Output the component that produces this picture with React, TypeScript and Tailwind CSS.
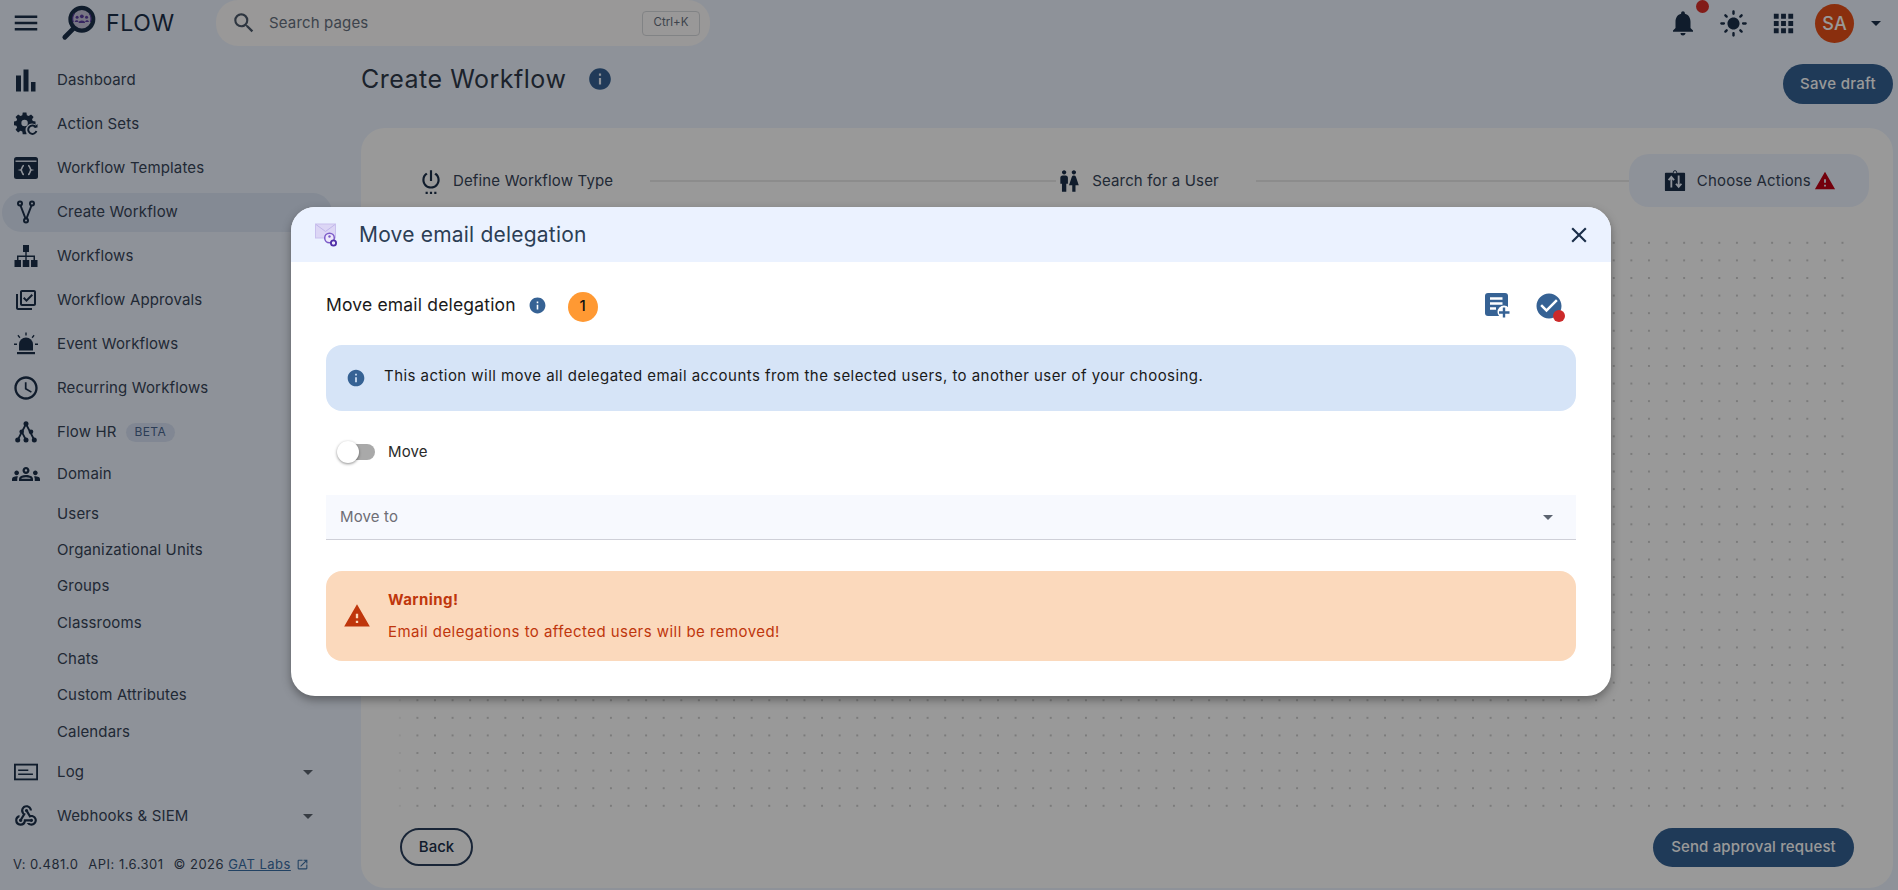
import React from "react";
import {
  MdOutlineLibraryAddCheck, MdOutlineAccessTime, MdOutlineGroups, MdOutlineWebhook, MdNotifications,
  MdLightMode, MdApps, MdSettingsPower, MdWc, MdInfo, MdCheckCircle, MdWarning, MdClose, MdSearch,
  MdArrowDropDown, MdOpenInNew, MdMenu,
} from "react-icons/md";

const Bars = () => (
  <svg viewBox="0 0 24 24" className="w-6 h-6" fill="#1b2f4a">
    <rect x="2" y="7.500" width="5" height="16" />
    <rect x="9.500" y="1.500" width="5" height="22" />
    <rect x="17" y="14" width="4.500" height="9.500" />
  </svg>
);
const ActionSets = () => (
  <svg viewBox="0 0 24 24" className="w-6 h-6">
    <path fill="#1b2f4a" fillRule="evenodd" d="M9.500 0.500h4l.5 3 2 .8 2.500-1.700 2.800 2.800-1.700 2.500.8 2 3 .5v4l-3 .5-.8 2 1.700 2.500-2.800 2.800-2.500-1.700-2 .8-.5 3h-4l-.5-3-2-.8-2.500 1.700-2.800-2.800 1.700-2.500-.8-2-3-.5v-4l3-.5.8-2-1.700-2.500 2.800-2.800 2.500 1.700 2-.8zM11.500 8.500a3.500 3.500 0 1 0 0 7 3.500 3.500 0 0 0 0-7z" transform="scale(.92)" />
    <circle cx="18" cy="18" r="6.500" fill="#edf4ff" />
    <path d="M22 15.500a4.200 4.200 0 1 0 .4 3.500" fill="none" stroke="#1b2f4a" strokeWidth="2" />
    <path d="M19.500 15.500h4v-3.500z" fill="#1b2f4a" />
  </svg>
);
const Templates = () => (
  <svg viewBox="0 0 24 22" className="w-[24px] h-[22px]">
    <rect x="0" y="0" width="24" height="22" rx="2.500" fill="#1b2f4a" />
    <rect x="1.500" y="3.500" width="21" height="1.400" fill="#edf4ff" />
    <path d="M10 8.500c-2.500 0-1.500 4-3.300 4.500 1.800.5.8 4.500 3.300 4.500M14 8.500c2.500 0 1.500 4 3.300 4.500-1.800.5-.8 4.500-3.300 4.500" stroke="#edf4ff" strokeWidth="1.700" fill="none" />
  </svg>
);
const Fork = () => (
  <svg viewBox="0 0 24 24" className="w-6 h-6" fill="none" stroke="#1b2f4a" strokeWidth="2">
    <circle cx="6" cy="3.500" r="2" />
    <circle cx="18" cy="3.500" r="2" />
    <circle cx="12" cy="20.500" r="2" />
    <path d="M6.500 5.500 11.500 18.500M17.500 5.500 12.500 18.500" />
  </svg>
);
const Sitemap = () => (
  <svg viewBox="0 0 24 24" className="w-6 h-6" fill="#1b2f4a">
    <rect x="9" y="1" width="6" height="7" />
    <rect x="0.500" y="16" width="6.500" height="7" />
    <rect x="8.750" y="16" width="6.500" height="7" />
    <rect x="17" y="16" width="6.500" height="7" />
    <path d="M11.300 8h1.400v3.500H21V16h-1.500v-3H12.700v3h-1.400v-3H4.500v3H3v-4.500h8.300z" />
  </svg>
);
const Siren = () => (
  <svg viewBox="0 0 24 24" className="w-6 h-6" fill="#1b2f4a">
    <path d="M5 18.500v-6a7 7 0 0 1 14 0v6z" />
    <rect x="3" y="20" width="18" height="2.200" />
    <path d="M11.300 0.500h1.400v3h-1.400zM0 11.500h3v1.400H0zM21 11.500h3v1.400h-3zM3.400 3.800l1-1 2 2.400-1 1zM20.600 3.800l-1-1-2 2.400 1 1z" />
  </svg>
);
const HrTree = () => (
  <svg viewBox="0 0 24 24" className="w-6 h-6" fill="#1b2f4a">
    <circle cx="12" cy="3.700" r="2.500" />
    <circle cx="7.700" cy="11.700" r="2.300" />
    <circle cx="17" cy="11.700" r="2.300" />
    <circle cx="3.700" cy="20" r="2.500" />
    <circle cx="12" cy="20" r="2.500" />
    <circle cx="20.300" cy="20" r="2.500" />
    <path d="M12 4 3.700 20M12 4l8.300 16M7.700 11.700 12 20" fill="none" stroke="#1b2f4a" strokeWidth="1.800" />
  </svg>
);
const LogIcon = () => (
  <svg viewBox="0 0 26 18" className="w-[26px] h-[18px]" fill="none">
    <rect x="1" y="1" width="24" height="16" fill="none" stroke="#1b2f4a" strokeWidth="2" />
    <path d="M4.500 7h11M4.500 11.500h16" stroke="#1b2f4a" strokeWidth="1.600" />
  </svg>
);
const ChooseIcon = () => (
  <svg viewBox="0 0 24 24" className="w-[22px] h-[24px] shrink-0" fill="#1b2f4a">
    <path d="M2 3h20a1 1 0 0 1 1 1v18a1 1 0 0 1-1 1H2a1 1 0 0 1-1-1V4a1 1 0 0 1 1-1z" />
    <path d="M8 19V8M5 11l3-3.500 3 3.500M16 6v12M13 15l3 3.500 3-3.500" stroke="#edf4ff" strokeWidth="2" fill="none" />
    <circle cx="12" cy="2.500" r="1.800" fill="#edf4ff" stroke="#1b2f4a" />
  </svg>
);
const NoteAdd = () => (
  <svg viewBox="0 0 25 25" className="w-[25px] h-[25px]">
    <rect x="0" y="0" width="23" height="23" rx="3" fill="#366294" />
    <path d="M5 5.500h12.500M5 10.500h12.500M5 15.500h6" stroke="#fff" strokeWidth="2.400" />
    <circle cx="19" cy="19" r="6.500" fill="#fff" />
    <path d="M19 14.500v10M14 19.500h10.500" stroke="#366294" strokeWidth="2.400" />
  </svg>
);
const Logo = () => (
  <svg viewBox="0 0 38 38" className="w-[36px] h-[36px]">
    <circle cx="22" cy="15" r="12" fill="#c9c5dc" stroke="#1b2f4a" strokeWidth="4.500" />
    <path d="M13 25 4 34" stroke="#1b2f4a" strokeWidth="5" strokeLinecap="round" />
    <g fill="#5a3ea0">
      <circle cx="22" cy="12" r="2" />
      <circle cx="17" cy="13" r="1.600" />
      <circle cx="27" cy="13" r="1.600" />
      <path d="M18.500 19c0-3.500 7-3.500 7 0zM14.500 18c0-2.500 4-2.500 4 0zM25.500 18c0-2.500 4-2.500 4 0z" />
      <path d="M14 9a10 10 0 0 0-1 9M30 9a10 10 0 0 1 1 9" fill="none" stroke="#5a3ea0" strokeWidth="1.200" />
    </g>
  </svg>
);
const MailIcon = () => (
  <svg viewBox="0 0 22 24" className="w-[22px] h-[24px]">
    <rect x="0.500" y="1" width="20" height="14" fill="#dcd6f5" stroke="#c9c0ee" />
    <path d="M1 1.500l9.500 7 9.500-7" fill="none" stroke="#c0b6ea" />
    <circle cx="14.500" cy="15" r="4.800" fill="#eee9fb" stroke="#7c5cc9" strokeWidth="1.500" />
    <circle cx="14.500" cy="13.500" r="1.200" fill="#7c5cc9" />
    <circle cx="18.500" cy="20" r="2.600" fill="#eee9fb" stroke="#4f2fa8" strokeWidth="1.800" />
  </svg>
);

const iconCls = "w-6 h-6 text-[#1b2f4a]";
const top: [React.ReactNode, string][] = [
  [<Bars />, "Dashboard"],
  [<ActionSets />, "Action Sets"],
  [<Templates />, "Workflow Templates"],
];
const top2: [React.ReactNode, string][] = [
  [<Sitemap />, "Workflows"],
  [<MdOutlineLibraryAddCheck className={iconCls} />, "Workflow Approvals"],
  [<Siren />, "Event Workflows"],
  [<MdOutlineAccessTime className="w-[28px] h-[28px] text-[#1b2f4a] -mx-[2px] shrink-0" />, "Recurring Workflows"],
];

function Row({ icon, label, children }: { icon: React.ReactNode; label: string; children?: React.ReactNode }) {
  return (
    <div className="h-11 flex items-center pl-[14px] pr-[14px]">
      <span className="w-6 h-6 flex items-center justify-center shrink-0">{icon}</span>
      <span className="ml-[19px] text-[15px] tracking-[0.01em] text-[#374559]">{label}</span>
      {children}
    </div>
  );
}

export default function App() {
  return (
    <div className="relative w-full h-[890px] overflow-hidden bg-[#edf4ff] font-['Inter',sans-serif]">
      <header className="h-[46px] flex items-center">
        <MdMenu className="w-[30px] h-[30px] ml-[11px] text-[#1b2f4a] shrink-0" />
        <span className="ml-[20px] shrink-0"><Logo /></span>
        <span className="ml-[9px] text-[23px] tracking-[0.03em] text-[#1b2f4a] w-[110px]">FLOW</span>
        <div className="w-[494px] h-[46px] rounded-[22px] bg-[#fffdfd] flex items-center pl-[15px] pr-[10px]">
          <MdSearch className="w-[26px] h-[26px] text-[#4d5a6c]" />
          <span className="ml-[12px] text-[15px] tracking-[0.01em] text-[#67717f]">Search pages</span>
          <span className="ml-auto w-[58px] h-[25px] border border-[#d8dade] rounded-[4px] flex items-center justify-center text-[11.500px] text-[#67717f]">Ctrl+K</span>
        </div>
        <div className="ml-auto flex items-center">
          <span className="relative -ml-[3px]">
            <MdNotifications className="block w-[30px] h-[30px] text-[#1b2f4a]" />
            <span className="absolute -top-[8px] left-[28px] w-[13px] h-[13px] rounded-full bg-[#d9302a]" />
          </span>
          <MdLightMode className="ml-[21px] w-[29px] h-[29px] text-[#1b2f4a]" />
          <MdApps className="ml-[21px] w-[29px] h-[29px] text-[#1b2f4a]" />
          <span className="ml-[17px] w-[39px] h-[39px] rounded-full bg-[#e64f18] flex items-center justify-center text-white text-[18px] font-medium">SA</span>
          <MdArrowDropDown className="ml-[10px] mr-[10px] w-[24px] h-[24px] text-[#1b2f4a]" />
        </div>
      </header>

      <div className="flex h-[844px]">
        <aside className="relative w-[361px] shrink-0 pt-[12px]">
          {top.map(([ic, l]) => <Row key={l} icon={ic} label={l} />)}
          <div className="h-11 flex items-center">
            <div className="ml-[2px] w-[330px] h-[39px] rounded-[20px] bg-[#dce6f7] flex items-center pl-[12px]">
              <span className="w-6 h-6 flex items-center justify-center"><Fork /></span>
              <span className="ml-[19px] text-[15px] tracking-[0.01em] text-[#374559]">Create Workflow</span>
            </div>
          </div>
          {top2.map(([ic, l]) => <Row key={l} icon={ic} label={l} />)}
          <Row icon={<HrTree />} label="Flow HR">
            <span className="ml-[9px] h-[19px] px-[9px] rounded-full bg-[#d8e2f5] text-[12px] tracking-[0.03em] text-[#4a6690] flex items-center">BETA</span>
          </Row>
          <div className="h-[40px] mb-[2px] flex items-center pl-[14px]">
            <MdOutlineGroups className="w-[28px] h-[28px] -mx-[2px] text-[#1b2f4a]" />
            <span className="ml-[19px] text-[15px] tracking-[0.01em] text-[#374559]">Domain</span>
          </div>
          {["Users", "Organizational Units", "Groups", "Classrooms", "Chats", "Custom Attributes", "Calendars"].map((s) => (
            <div key={s} className="h-[36.3px] flex items-center pl-[57px] text-[15px] tracking-[0.01em] text-[#374559]">{s}</div>
          ))}
          <Row icon={<LogIcon />} label="Log"><MdArrowDropDown className="w-[24px] h-[24px] text-[#5c6470] absolute left-[296px]" /></Row>
          <Row icon={<MdOutlineWebhook className="w-[26px] h-[26px] text-[#1b2f4a] shrink-0" />} label="Webhooks &amp; SIEM"><MdArrowDropDown className="w-[24px] h-[24px] text-[#5c6470] absolute left-[296px]" /></Row>
          <div className="mt-[17px] pl-[13px] flex items-center text-[13px] tracking-[0.037em] text-[#374559] whitespace-pre">
            <span>V: 0.481.0</span>
            <span className="ml-[10px]">API: 1.6.301</span>
            <span className="ml-[10px]">© 2026 </span>
            <span className="underline text-[#3a6ea5]">GAT Labs</span>
            <MdOpenInNew className="ml-[5px] w-[13px] h-[13px] text-[#3a6ea5]" />
          </div>
        </aside>

        <main className="flex-1 pr-[5px] min-w-0">
          <div className="h-[82px] flex items-start">
            <h1 className="mt-[16px] text-[25px] tracking-[0.02em] text-[#2f3a4a] leading-[34px]">Create Workflow</h1>
            <MdInfo className="ml-[21px] mt-[20px] w-[26px] h-[26px] text-[#366294]" />
            <button className="ml-auto mt-[18px] w-[110px] h-[40px] rounded-[20px] bg-[#346193] text-white text-[15px] font-medium tracking-[0.02em]">Save draft</button>
          </div>
          <section className="h-[760px] rounded-[24px] bg-white flex flex-col">
            <div className="h-[106px] flex items-start justify-between pt-[26px] pl-[57px] pr-[25px]">
              <div className="h-[53px] flex items-center shrink-0 whitespace-nowrap">
                <MdSettingsPower className="w-[26px] h-[26px] text-[#1b2f4a] shrink-0" />
                <span className="ml-[9px] mt-[1px] text-[15px] tracking-[0.01em] text-[#374559]">Define Workflow Type</span>
                <span className="ml-[37px] w-[406px] h-[2px] bg-[#eaeaea] shrink-0" />
                <MdWc className="w-[26px] h-[26px] text-[#1b2f4a] shrink-0" />
                <span className="ml-[10px] mt-[1px] text-[15px] tracking-[0.01em] text-[#374559]">Search for a User</span>
                <span className="ml-[37px] w-[373px] h-[2px] bg-[#eaeaea] shrink-0" />
              </div>
              <div className="w-[240px] h-[53px] rounded-[20px] bg-[#edf4ff] flex items-center pl-[35px] shrink-0 whitespace-nowrap">
                <ChooseIcon />
                <span className="ml-[11px] mt-[1px] text-[15px] tracking-[0.01em] text-[#374559]">Choose Actions</span>
                <MdWarning className="ml-[3px] w-[22px] h-[22px] text-[#c00014] shrink-0" />
              </div>
            </div>
            <div className="ml-[30px] w-[1460.8px] h-[580.8px] bg-[radial-gradient(circle,#b8b8b8_0.6px,transparent_0.9px)] bg-[size:17.6px_17.6px] [mask-image:linear-gradient(to_right,transparent,#000_28px)]" />
            <div className="flex justify-between pl-[39px] pr-[39px] mt-[13px]">
              <button className="w-[73px] h-[38px] rounded-full border-2 border-[#2a3f5c] text-[#1b2f4a] text-[15px] font-medium">Back</button>
              <button className="w-[201px] h-[39px] rounded-full bg-[#346193] text-white text-[15px] font-medium tracking-[0.01em]">Send approval request</button>
            </div>
          </section>
        </main>
      </div>

      <div className="absolute inset-0 bg-black/40 pl-[291px] pt-[207px]">
        <div className="w-[1320px] h-[489px] rounded-[24px] bg-white overflow-hidden shadow-[0_4px_10px_rgba(0,0,0,0.35)]">
          <div className="h-[55px] bg-[#ebf2ff] flex items-center pl-[24px] pr-[19px]">
            <MailIcon />
            <span className="ml-[22px] text-[21px] tracking-[0.01em] text-[#2c3e55]">Move email delegation</span>
            <MdClose className="ml-auto w-[26px] h-[26px] text-[#1b2f4a]" />
          </div>
          <div className="px-[35px]">
            <div className="h-[83px] pt-[4px] flex items-center">
              <span className="text-[17.500px] tracking-[0.01em] text-[#1a1a1a]">Move email delegation</span>
              <MdInfo className="ml-[12px] w-[19px] h-[19px] text-[#366294]" />
              <span className="ml-[21px] mt-[2px] w-[30px] h-[30px] rounded-full bg-[#ff9933] flex items-center justify-center text-[15px] text-[#111] font-medium">1</span>
              <span className="ml-auto"><NoteAdd /></span>
              <span className="relative ml-[24px] mr-[12px]">
                <MdCheckCircle className="block w-[30px] h-[30px] text-[#366294]" />
                <span className="absolute right-[-1px] bottom-[-1px] w-[12px] h-[12px] rounded-full bg-[#cc2a2a]" />
              </span>
            </div>
            <div className="h-[66px] rounded-[16px] bg-[#d6e4f7] flex items-center pl-[20px]">
              <MdInfo className="w-[20px] h-[20px] text-[#366294]" />
              <span className="ml-[18px] -mt-[4px] text-[15px] tracking-[0.03em] text-[#1a1a1a]">This action will move all delegated email accounts from the selected users, to another user of your choosing.</span>
            </div>
            <div className="h-[84px] pb-[2px] flex items-center pl-[11px]">
              <span className="relative w-[35px] h-4 ml-[3px] rounded-full bg-[#a9a9a9]">
                <span className="absolute -left-[3px] -top-[3px] w-[22px] h-[22px] rounded-full bg-white shadow-[0_1px_3px_rgba(0,0,0,0.45)]" />
              </span>
              <span className="ml-[13px] text-[15px] tracking-[0.01em] text-[#2a2a2a]">Move</span>
            </div>
            <div className="h-[45px] bg-[#f7f9fe] border-b border-[#cfd0d8] flex items-center pl-[14px] pr-[16px]">
              <span className="text-[15px] tracking-[0.01em] text-[#6e6e75]">Move to</span>
              <MdArrowDropDown className="ml-auto w-[24px] h-[24px] text-[#5c6470]" />
            </div>
            <div className="mt-[31px] h-[90px] rounded-[16px] bg-[#fbd9bc] flex items-center pl-[17px]">
              <MdWarning className="w-[28px] h-[28px] text-[#bf360c]" />
              <div className="ml-[17px] text-[15px] tracking-[0.03em] text-[#bf360c]">
                <div className="font-bold leading-[20px]">Warning!</div>
                <div className="mt-[12px] leading-[20px]">Email delegations to affected users will be removed!</div>
              </div>
            </div>
          </div>
        </div>
      </div>
    </div>
  );
}
